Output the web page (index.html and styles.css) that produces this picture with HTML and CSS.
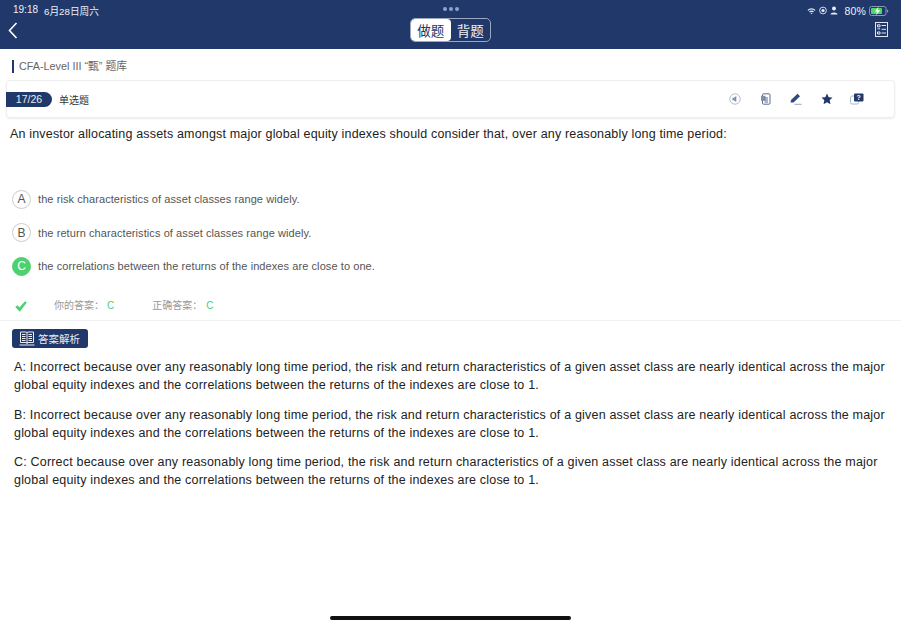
FILE: index.html
```html
<!DOCTYPE html>
<html lang="zh">
<head>
<meta charset="utf-8">
<title>CFA-Level III 题库</title>
<link rel="stylesheet" href="styles.css">
</head>
<body>
<div class="page">
  <header class="header">
    <div class="status">
      <div class="status-left"><span>19:18</span><span class="date">6月28日周六</span></div>
      <div class="dots"><i></i><i></i><i></i></div>
      <div class="status-right">
        <svg width="9" height="8" viewBox="0 0 10 8"><path d="M0.500 2.800A6.500 6.500 0 0 1 9.500 2.800L8.500 3.800A5 5 0 0 0 1.500 3.800ZM2.300 4.600A4 4 0 0 1 7.700 4.600L6.700 5.600A2.600 2.600 0 0 0 3.300 5.600ZM5 7.600L3.900 6.400A1.600 1.600 0 0 1 6.100 6.400Z" fill="#e8ecf4"/></svg>
        <svg width="8" height="9" viewBox="0 0 9 9"><circle cx="4.500" cy="4.500" r="3.800" fill="none" stroke="#e8ecf4" stroke-width="1"/><circle cx="4.500" cy="4.500" r="1.800" fill="#e8ecf4"/></svg>
        <svg width="8" height="9" viewBox="0 0 8 9"><circle cx="4" cy="2.500" r="2" fill="#e8ecf4"/><path d="M0.500 8.500C0.500 5.800 7.500 5.800 7.500 8.500Z" fill="#e8ecf4"/></svg>
        <span class="pct">80%</span>
        <svg width="20" height="10" viewBox="0 0 20 10"><rect x="0.500" y="0.500" width="16.500" height="9" rx="2" fill="none" stroke="#8a97b3"/><rect x="2" y="2" width="11" height="6" rx="1" fill="#4cd964"/><path d="M18 3.500v3c.8-.3 1.300-.8 1.300-1.500s-.5-1.200-1.300-1.500Z" fill="#8a97b3"/><path d="M9.500 0.800L5.800 5.500H8L7 9.200L11.200 4.200H8.800Z" fill="#fff"/></svg>
      </div>
    </div>
    <div class="nav">
      <svg width="10" height="17" viewBox="0 0 10 17"><path d="M8.500 1L1.500 8.500L8.500 16" fill="none" stroke="#fff" stroke-width="1.600"/></svg>
      <div class="segment"><span class="seg seg-on">做题</span><span class="seg">背题</span></div>
      <svg width="13" height="15" viewBox="0 0 13 15"><rect x="0.500" y="0.500" width="12" height="14" fill="none" stroke="#dfe4ee"/><path d="M2.500 2.800h2.500v2h-2.500ZM2.500 6.800h2.500M2.500 10h2.500v2h-2.500ZM6.500 3.500h4.500M6.500 7.300h4.500M6.500 11h4.500" fill="none" stroke="#dfe4ee"/></svg>
    </div>
  </header>
  <div class="crumb"><span class="crumb-text">CFA-Level III “甄” 题库</span></div>
  <section class="card">
    <div class="card-left"><span class="count">17/26</span><span class="qtype">单选题</span></div>
    <div class="tools">
      <span class="tool"><svg width="12" height="12" viewBox="0 0 12 12"><circle cx="6" cy="6" r="5.200" fill="#fff" stroke="#b4c0d4" stroke-width="1"/><path d="M7.300 3v6L4.800 7.300H3.500V4.700h1.300Z" fill="#7d8fae"/></svg></span>
      <span class="tool"><svg width="11" height="12" viewBox="0 0 11 12"><rect x="2.500" y="0.800" width="7.500" height="10.400" rx="1" fill="none" stroke="#5a6d91"/><path d="M1 2.800h4.500v5H1Z" fill="#7d8fae"/><path d="M4.500 5h3.500M4.500 7h3.500M4.500 9h3.500" stroke="#5a6d91"/></svg></span>
      <span class="tool"><svg width="12" height="12" viewBox="0 0 12 12"><path d="M0.500 9.500L1 7L7.500 0.800L10 3.200L3.500 9.500Z" fill="#2a4a80"/><path d="M4.500 11.300H11.500" stroke="#9aa7bf"/></svg></span>
      <span class="tool"><svg width="12" height="12" viewBox="0 0 24 24"><path d="M12 1l3.400 7.300 7.600.9-5.600 5.400 1.500 7.900L12 18.600 5.100 22.500l1.500-7.900L1 9.200l7.600-.9Z" fill="#20386a"/></svg></span>
      <span class="tool"><svg width="14" height="12" viewBox="0 0 14 12"><rect x="0.500" y="3" width="8" height="8" rx="1.500" fill="#fff" stroke="#aab8d0"/><rect x="4" y="0.500" width="9.500" height="8" rx="1" fill="#20386a"/><text class="tool-q" x="8.700" y="7">?</text></svg></span>
    </div>
  </section>
  <p class="question">An investor allocating assets amongst major global equity indexes should consider that, over any reasonably long time period:</p>
  <ul class="options">
    <li class="option"><span class="letter">A</span><span>the risk characteristics of asset classes range widely.</span></li>
    <li class="option"><span class="letter">B</span><span>the return characteristics of asset classes range widely.</span></li>
    <li class="option"><span class="letter letter-ok">C</span><span>the correlations between the returns of the indexes are close to one.</span></li>
  </ul>
  <div class="answer">
    <svg class="check" width="12" height="11" viewBox="0 0 12 11"><path d="M0.300 6L2.500 4.300L4.500 6.600L10 0.300L11.800 1.500L4.800 10.800Z" fill="#4cd070"/></svg>
    <span class="ans-label">你的答案：</span><span class="ans-val">C</span>
    <span class="ans-label ans-second">正确答案：</span><span class="ans-val ans-val-last">C</span>
  </div>
  <div class="badge-row">
    <span class="badge">
      <svg width="16" height="15" viewBox="0 0 16 15"><path d="M1.500 1h5.500c.6 0 1 .4 1 1 0-.6.4-1 1-1h5.500v10.500H9c-.6 0-1 .3-1 1 0-.7-.4-1-1-1H1.500ZM8 2v10.500M3 3.500h3.500M3 5.500h3.500M3 7.500h3.500M3 9.500h3.500M9.500 3.500H13M9.500 5.500H13M9.500 7.500H13M9.500 9.500H13M0.500 14h15" fill="none" stroke="#e8ecf4" stroke-width="1"/></svg>
      答案解析
    </span>
  </div>
  <div class="explain">
    <p>A: Incorrect because over any reasonably long time period, the risk and return characteristics of a given asset class are nearly identical across the major global equity indexes and the correlations between the returns of the indexes are close to 1.</p>
    <p>B: Incorrect because over any reasonably long time period, the risk and return characteristics of a given asset class are nearly identical across the major global equity indexes and the correlations between the returns of the indexes are close to 1.</p>
    <p>C: Correct because over any reasonably long time period, the risk and return characteristics of a given asset class are nearly identical across the major global equity indexes and the correlations between the returns of the indexes are close to 1.</p>
  </div>
  <div class="home"><span class="home-bar"></span></div>
</div>
</body>
</html>
```
FILE: styles.css
```css
* { box-sizing: border-box; }
html, body { margin: 0; padding: 0; }
body {
  width: 901px;
  height: 626px;
  overflow: hidden;
  background: #fff;
  font-family: "Liberation Sans", "Noto Sans CJK SC", sans-serif;
  color: #222;
}
.page { display: flex; flex-direction: column; height: 626px; }
.header { height: 49px; background: #20386a; color: #eef1f6; display: flex; flex-direction: column; flex: none; }
.status { position: relative; height: 18px; padding: 3px 12px 0 13px; display: flex; justify-content: space-between; align-items: center; font-size: 10px; }
.status-left { display: flex; gap: 6px; }
.date { font-size: 9.700px; }
.dots { position: absolute; left: 443px; top: 7px; display: flex; gap: 2px; }
.dots i { width: 4px; height: 4px; border-radius: 50%; background: #8fa3c9; }
.status-right { display: flex; align-items: center; gap: 3px; }
.pct { font-size: 10.500px; margin-left: 3px; letter-spacing: .2px; }
.nav { position: relative; flex: 1; display: flex; justify-content: space-between; align-items: flex-start; padding: 4px 13px 0 8px; }
.segment {
  position: absolute; left: 410px; top: 0;
  width: 81px; height: 24px;
  display: flex;
  border: 1px solid #9aa7bf;
  border-radius: 5px;
  overflow: hidden;
}
.seg { flex: 1; display: flex; align-items: center; justify-content: center; font-size: 13.500px; }
.seg-on { background: #fff; color: #20386a; border-radius: 4px; }
.crumb { height: 31px; padding: 11px 0 0 12px; flex: none; }
.crumb-text { display: block; border-left: 2px solid #20386a; padding-left: 5px; font-size: 10.800px; line-height: 13px; color: #666; }
.card {
  margin: 0 6px;
  height: 38px;
  flex: none;
  border: 1px solid #eee;
  border-radius: 4px;
  box-shadow: 0 1px 2px rgba(0,0,0,.08);
  display: flex;
  align-items: center;
  justify-content: space-between;
}
.card-left { display: flex; align-items: center; gap: 7px; margin-left: -1px; }
.count {
  width: 46px; height: 15px;
  background: #20386a; color: #e8ecf4;
  border-radius: 0 8px 8px 0;
  font-size: 10.500px;
  display: flex; align-items: center; justify-content: center;
}
.qtype { font-size: 10px; color: #333; }
.tools { display: flex; align-items: center; gap: 16.500px; padding-right: 30px; }
.tool { width: 14px; display: flex; justify-content: center; }
.tool-q { font: bold 7px "Liberation Sans", sans-serif; fill: #fff; text-anchor: middle; }
.question { margin: 7px 0 0 10px; font-size: 12.500px; line-height: 18px; letter-spacing: .17px; color: #222; flex: none; height: 18px; white-space: nowrap; }
.options { list-style: none; margin: 0; padding: 46.500px 0 0 12px; display: flex; flex-direction: column; gap: 14px; flex: none; }
.option { display: flex; align-items: center; gap: 7px; height: 19.500px; font-size: 11px; letter-spacing: .08px; color: #555; }
.letter {
  width: 19px; height: 19px; border-radius: 50%;
  border: 1px solid #ccc;
  display: flex; align-items: center; justify-content: center;
  font-size: 12px; color: #555;
}
.letter-ok { background: #4cd070; border-color: #4cd070; color: #fff; }
.answer { margin-top: 19.500px; height: 25px; flex: none; display: flex; align-items: flex-start; padding: 3px 0 0 15px; border-bottom: 1px solid #f2f2f2; font-size: 10px; line-height: 14px; }
.check { margin-top: 2px; margin-right: 27px; }
.ans-label { color: #999; }
.ans-val { color: #4cd070; margin-left: 3px; }
.ans-val-last { margin-left: 4px; }
.ans-second { margin-left: 38px; }
.badge-row { padding: 8px 0 0 12px; flex: none; display: flex; }
.badge {
  width: 76px; height: 19px;
  background: #20386a; color: #e8ecf4;
  border-radius: 3px;
  display: flex; align-items: center; gap: 3px; padding-left: 7px;
  font-size: 10.500px;
}
.explain { padding: 10.500px 14px 0; flex: none; font-size: 12.500px; line-height: 18px; letter-spacing: .19px; color: #222; }
.explain p { margin: 0 0 11.500px; }
.home { margin-top: auto; padding-bottom: 6px; display: flex; justify-content: center; flex: none; }
.home-bar { width: 241px; height: 4px; border-radius: 2px; background: #111; }
```
